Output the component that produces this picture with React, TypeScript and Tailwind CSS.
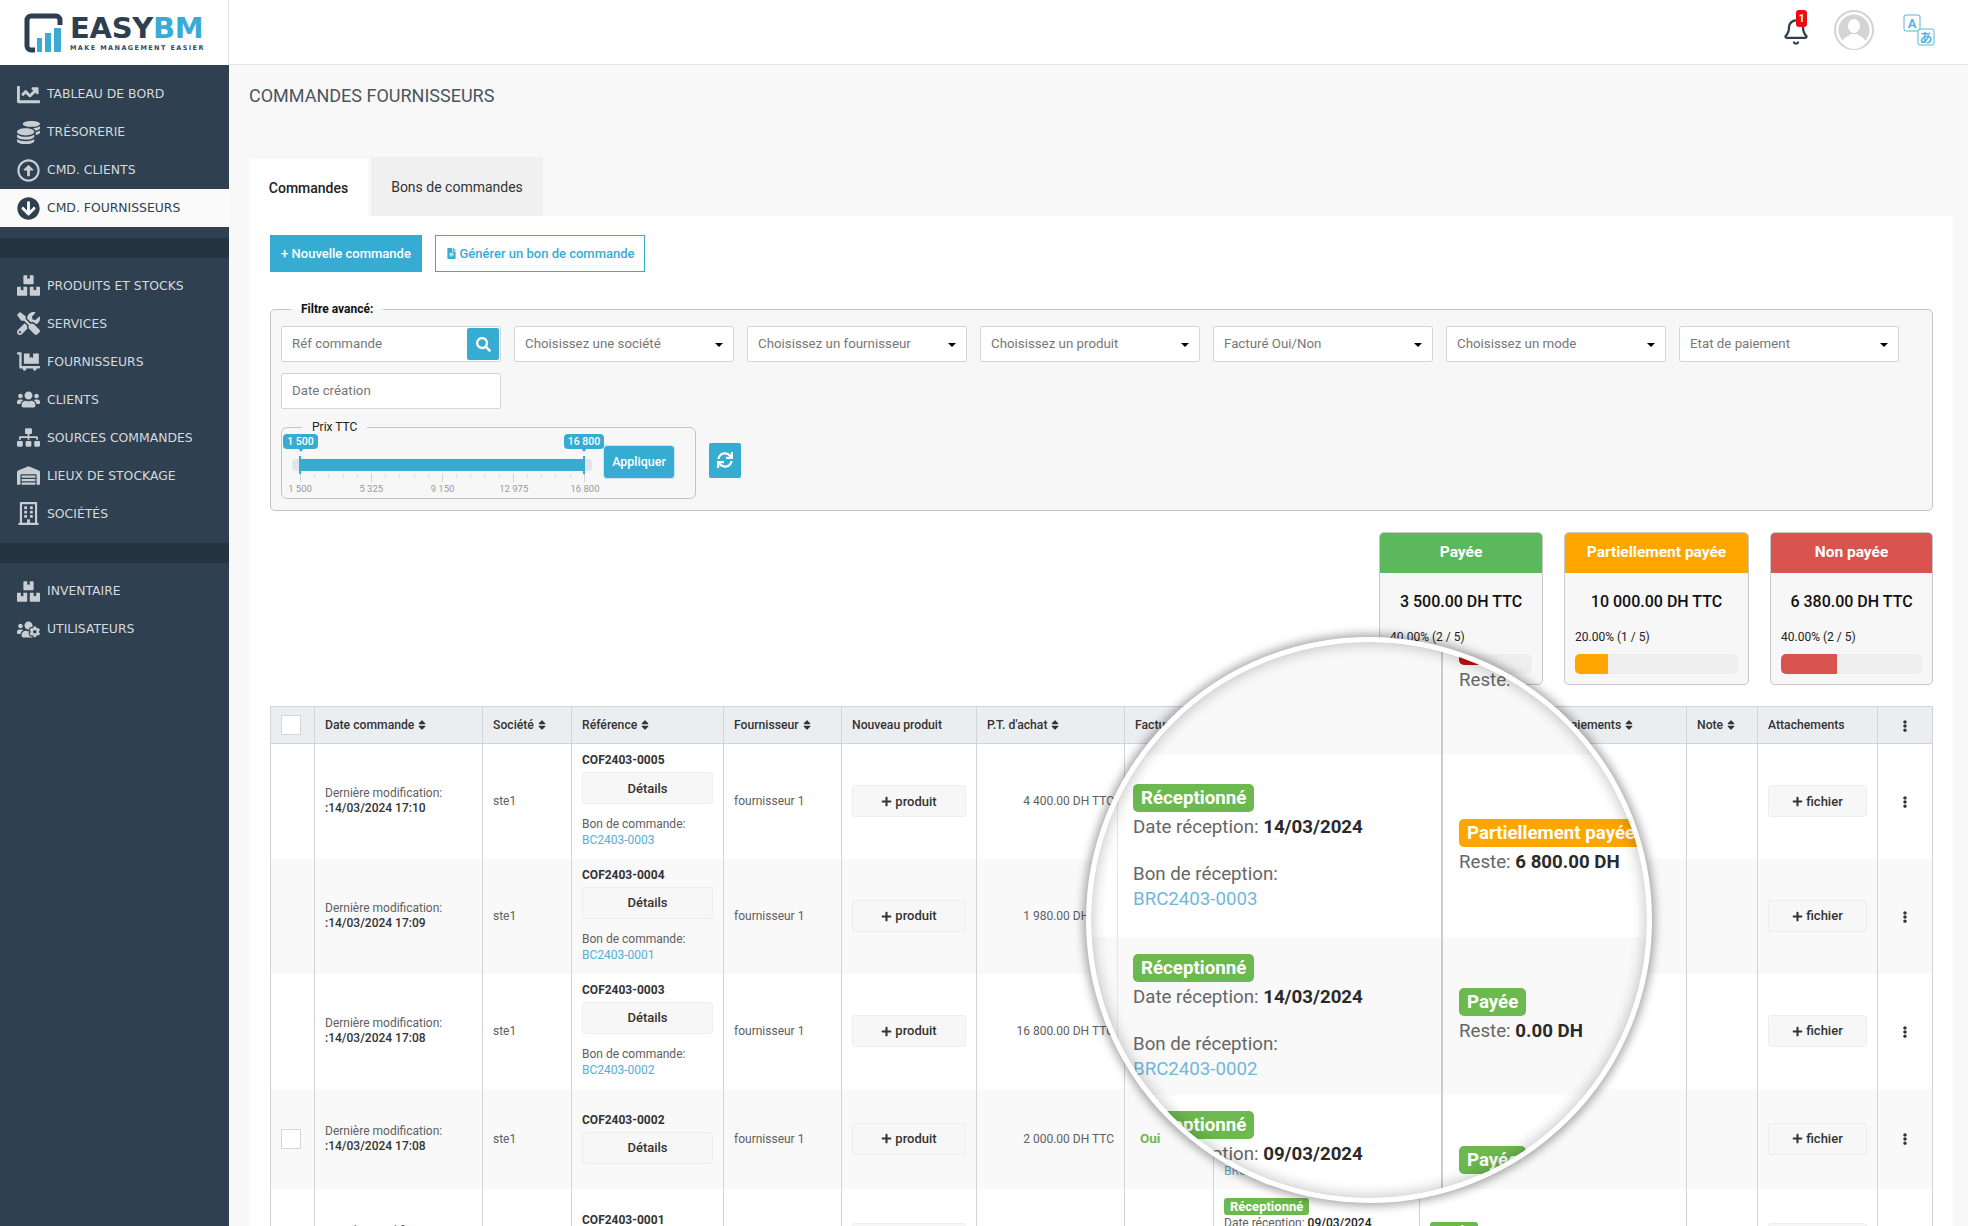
import { Bell } from 'lucide-react'
import {
  FaArrowCircleDown,
  FaBoxes,
  FaChartLine,
  FaCoins,
  FaDollyFlatbed,
  FaEllipsisV,
  FaFileAlt,
  FaPlus,
  FaRegArrowAltCircleUp,
  FaRegBuilding,
  FaSearch,
  FaSitemap,
  FaSort,
  FaSync,
  FaTools,
  FaUsers,
  FaUsersCog,
  FaWarehouse,
} from 'react-icons/fa'

const menuGroups = [
  [
    { label: 'Tableau de bord', icon: FaChartLine },
    { label: 'Trésorerie', icon: FaCoins },
    { label: 'Cmd. clients', icon: FaRegArrowAltCircleUp },
    { label: 'Cmd. fournisseurs', icon: FaArrowCircleDown, active: true },
  ],
  [
    { label: 'Produits et stocks', icon: FaBoxes },
    { label: 'Services', icon: FaTools },
    { label: 'Fournisseurs', icon: FaDollyFlatbed },
    { label: 'Clients', icon: FaUsers },
    { label: 'Sources commandes', icon: FaSitemap },
    { label: 'Lieux de stockage', icon: FaWarehouse },
    { label: 'Sociétés', icon: FaRegBuilding },
  ],
  [
    { label: 'Inventaire', icon: FaBoxes },
    { label: 'Utilisateurs', icon: FaUsersCog },
  ],
]

const selects = [
  'Choisissez une société',
  'Choisissez un fournisseur',
  'Choisissez un produit',
  'Facturé Oui/Non',
  'Choisissez un mode',
  'Etat de paiement',
]

const orders = [
  { date: '14/03/2024 17:10', ref: 'COF2403-0005', bc: 'BC2403-0003', amount: '4 400.00 DH TTC', h: 'h-[115px]', recep: '14/03/2024', brc: 'BRC2403-0003', pay: 'Partiellement payée', payBg: 'bg-[#ffa500]', rest: '6 800.00 DH' },
  { date: '14/03/2024 17:09', ref: 'COF2403-0004', bc: 'BC2403-0001', amount: '1 980.00 DH TTC', h: 'h-[115px]', recep: '14/03/2024', brc: 'BRC2403-0003', pay: 'Partiellement payée', payBg: 'bg-[#ffa500]', rest: '6 800.00 DH' },
  { date: '14/03/2024 17:08', ref: 'COF2403-0003', bc: 'BC2403-0002', amount: '16 800.00 DH TTC', h: 'h-[115px]', recep: '14/03/2024', brc: 'BRC2403-0002', pay: 'Payée', payBg: 'bg-[#6cb94f]', rest: '0.00 DH' },
  { date: '14/03/2024 17:08', ref: 'COF2403-0002', amount: '2 000.00 DH TTC', h: 'h-[100px]', check: true, oui: true, recep: '09/03/2024', brc: 'BRC2403-0001', pay: 'Payée', payBg: 'bg-[#6cb94f]', rest: '0.00 DH' },
  { date: '14/03/2024 17:07', ref: 'COF2403-0001', amount: '1 200.00 DH TTC', h: 'h-[100px]', check: true, oui: true, recep: '09/03/2024', brc: 'BRC2403-0000', pay: 'Payée', payBg: 'bg-[#6cb94f]', rest: '0.00 DH' },
]

const Logo = () => (
  <div className="flex h-[65px] w-[229px] shrink-0 items-center border-r border-[#e6e6e6] bg-white pl-[24px]">
    <svg width="40" height="40" viewBox="0 0 40 40" className="mr-[6px] shrink-0">
      <path
        d="M11 37H7a4 4 0 0 1-4-4V7a4 4 0 0 1 4-4h25a4 4 0 0 1 4 4v5"
        fill="none"
        stroke="#2c3e50"
        strokeWidth="5"
      />
      <rect x="13" y="25" width="5" height="14" fill="#39acd6" />
      <rect x="21" y="20" width="6" height="19" fill="#39acd6" />
      <rect x="30" y="15" width="7" height="24" rx="1" fill="#39acd6" />
    </svg>
    <div className="flex flex-col font-['DejaVu_Sans',sans-serif]">
      <div className="-mt-[2px] h-[30px] text-[29px] leading-[32px] font-bold tracking-[-0.3px] text-[#2c3e50]">
        EASY<span className="text-[#39acd6]">BM</span>
      </div>
      <div className="mt-[2px] text-[6.5px] leading-[8px] font-bold tracking-[1.4px] whitespace-nowrap text-[#3c4c5c]">
        MAKE MANAGEMENT EASIER
      </div>
    </div>
  </div>
)

const Sidebar = () => (
  <aside className="flex w-[229px] shrink-0 flex-col">
    <Logo />
    <nav className="flex flex-1 flex-col bg-[#2f4050] pt-[10px] font-['DejaVu_Sans',sans-serif]">
      {menuGroups.map((group, i) => (
        <div key={i}>
          {i > 0 && <div className="mt-[10.5px] mb-[9px] h-[20px] bg-[#263340]" />}
          {group.map((item) => {
            const Icon = item.icon
            return (
              <div
                key={item.label}
                className={
                  item.active
                    ? 'flex h-[38px] items-center bg-[#fafafa] text-[#2f4050]'
                    : 'flex h-[38px] items-center text-[#d5dade]'
                }
              >
                <div className={item.active ? 'flex w-[47px] justify-center pl-[9px] text-[#2f4050]' : 'flex w-[47px] justify-center pl-[9px] text-[#c8ced4]'}>
                  <Icon size={23} />
                </div>
                <span className="mt-[1px] text-[12.4px] uppercase">{item.label}</span>
              </div>
            )
          })}
        </div>
      ))}
    </nav>
  </aside>
)

const Topbar = () => (
  <header className="flex h-[65px] shrink-0 items-center justify-end border-b border-[#e4e4e4] bg-white pr-[33px]">
    <div className="relative mr-[24px] text-[#2f4050]">
      <Bell size={28} strokeWidth={2} />
      <span className="absolute -top-[8px] left-[14px] flex h-[17px] w-[11px] items-center justify-center rounded-[3px] bg-[#ee0a14] text-[10px] font-bold text-white">
        1
      </span>
    </div>
    <svg width="40" height="40" viewBox="0 0 40 40" className="mr-[29px] -mt-[4px]">
      <circle cx="20" cy="20" r="19" fill="#fff" stroke="#d4d4d4" strokeWidth="2" />
      <circle cx="20" cy="20" r="15.5" fill="#d4d4d4" />
      <ellipse cx="20" cy="16" rx="6" ry="7" fill="#fff" />
      <path d="M8 33c1-6 7-7 9-9h6c2 2 8 3 9 9a15 15 0 0 1-24 0z" fill="#fff" />
    </svg>
    <svg width="32" height="32" viewBox="0 0 32 32" className="-mt-[4px]">
      <rect x="1" y="1" width="16" height="16" rx="2" fill="#fff" stroke="#55b5dc" />
      <rect x="15" y="15" width="16" height="16" rx="2" fill="#fff" stroke="#55b5dc" />
      <text x="9" y="14" textAnchor="middle" fontSize="13" fontWeight="700" fill="#55b5dc" fontFamily="Roboto">A</text>
      <text x="23" y="28" textAnchor="middle" fontSize="13" fontWeight="700" fill="#55b5dc" fontFamily="Noto Sans CJK JP">&#12354;</text>
    </svg>
  </header>
)

const SelectBox = ({ label }: { label: string }) => (
  <div className="flex h-[36px] w-[220px] items-center justify-between rounded-[2px] border border-[#d6d6d6] bg-white pr-[10px] pl-[10px] text-[13.3px] text-[#777]">
    <span>{label}</span>
    <span className="mt-[2px] h-0 w-0 border-x-[4px] border-t-[4px] border-x-transparent border-t-black" />
  </div>
)

const SliderBadge = ({ label, className }: { label: string; className: string }) => (
  <div className={`absolute -top-px flex h-[15px] items-center justify-center rounded-[4px] bg-[#37acd3] text-[10.5px] font-medium text-white ${className}`}>
    {label}
    <span className="absolute top-[14px] left-1/2 -ml-[3px] h-0 w-0 border-x-[3px] border-t-[4px] border-x-transparent border-t-[#37acd3]" />
  </div>
)

const Slider = () => (
  <fieldset className="w-[415px] rounded-[6px] border border-[#c4c4c4]">
    <legend className="ml-[20px] px-[10px] text-[12px] leading-[16px] text-[#222]">Prix TTC</legend>
    <div className="flex">
      <div className="relative h-[63px] w-[321px] shrink-0">
        <div className="absolute top-[24px] left-[10px] h-[12px] w-[300px] rounded-[4px] bg-[#e1e4e9]" />
        <div className="absolute top-[24px] left-[18px] h-[12px] w-[284px] bg-[#37acd3]" />
        <div className="absolute top-[21px] left-[17px] h-[18px] w-[2px] bg-[#37acd3]" />
        <div className="absolute top-[21px] left-[301px] h-[18px] w-[2px] bg-[#37acd3]" />
        <SliderBadge label="1 500" className="left-px w-[35px]" />
        <SliderBadge label="16 800" className="left-[282px] w-[40px]" />
        <div className="absolute top-[39px] left-[18px] flex w-[285px] justify-between">
          {Array.from({ length: 21 }).map((_, i) => (
            <div key={i} className={i % 5 === 0 ? 'h-[8px] w-px bg-[#cfd2d6]' : 'h-[4px] w-px bg-[#dcdfe3]'} />
          ))}
        </div>
        <div className="absolute top-[47px] left-[-12px] flex w-[345px] justify-between text-[9.5px] leading-[14px] text-[#999]">
          {['1 500', '5 325', '9 150', '12 975', '16 800'].map((t) => (
            <span key={t} className="w-[60px] text-center">{t}</span>
          ))}
        </div>
      </div>
      <button className="mt-[10px] h-[34px] w-[72px] rounded-[4px] border border-[#cfe6ef] bg-[#37acd3] text-[12.5px] font-medium text-white">
        Appliquer
      </button>
    </div>
  </fieldset>
)

const Filters = () => (
  <fieldset className="-mr-px rounded-[5px] border border-[#c4c4c4] bg-[#f7f7f7] px-[10px] pb-[11px]">
    <legend className="ml-[10px] px-[10px] text-[12px] leading-[16px] font-bold text-[#111]">Filtre avancé:</legend>
    <div className="mt-[9px] flex flex-wrap gap-x-[13px] gap-y-[11px]">
      <div className="flex h-[36px] w-[220px] items-center justify-between rounded-[2px] border border-[#d6d6d6] bg-white pr-[1px] pl-[10px] text-[13.3px] text-[#777]">
        <span>Réf commande</span>
        <div className="flex h-[32px] w-[32px] items-center justify-center rounded-[2px] bg-[#37acd3] text-white">
          <FaSearch size={15} />
        </div>
      </div>
      {selects.map((s) => (
        <SelectBox key={s} label={s} />
      ))}
      <div className="flex h-[36px] w-[220px] items-center rounded-[2px] border border-[#d6d6d6] bg-white pl-[10px] text-[13.3px] text-[#777]">
        Date création
      </div>
    </div>
    <div className="mt-[10px] flex items-center gap-[13px]">
      <Slider />
      <button className="mt-[2px] flex h-[35px] w-[32px] items-center justify-center rounded-[2px] bg-[#37acd3] text-white">
        <FaSync size={16} />
      </button>
    </div>
  </fieldset>
)

const StatusCard = ({ title, amount, pct, header, fill, bar, width }: { title: string; amount: string; pct: string; header: string; fill: string; bar: string; width: string }) => (
  <div className={`${width} h-[153px] overflow-hidden rounded-[5px] border border-[#c9c9c9] bg-[#f7f7f7]`}>
    <div className={`${header} flex h-[40px] items-center justify-center text-[15.5px] font-bold text-white`}>{title}</div>
    <div className="mt-[17px] text-center text-[16px] leading-[24px] font-medium text-[#111]">{amount}</div>
    <div className="mt-[15px] px-[10px] text-[12px] leading-[16px] text-[#222]">{pct}</div>
    <div className="mx-[10px] mt-[9px] h-[20px] overflow-hidden rounded-[5px] bg-[#eeeeee]">
      <div className={`${fill} ${bar} h-full`} />
    </div>
  </div>
)

const Th = ({ label, sort, className }: { label: string; sort?: boolean; className?: string }) => (
  <th className={`border border-[#d2d5d8] px-[10px] text-left text-[12.2px] font-medium text-[#333] ${className ?? ''}`}>
    {label}
    {sort && <FaSort size={12} className="ml-[2px] inline align-[-2px] text-[#333]" />}
  </th>
)

const LightButton = ({ children, className }: { children: React.ReactNode; className?: string }) => (
  <div className={`flex h-[32px] items-center justify-center gap-[3px] rounded-[3px] border border-[#eeeeee] bg-[#f7f7f7] text-[13px] font-medium text-[#333] ${className ?? ''}`}>
    {children}
  </div>
)

const OrdersTable = () => (
  <table className="w-[1662px] table-fixed text-[12px] text-[#606060]">
    <colgroup>
      <col className="w-[44px]" />
      <col className="w-[168px]" />
      <col className="w-[89px]" />
      <col className="w-[152px]" />
      <col className="w-[118px]" />
      <col className="w-[135px]" />
      <col className="w-[148px]" />
      <col className="w-[89px]" />
      <col className="w-[206px]" />
      <col className="w-[267px]" />
      <col className="w-[71px]" />
      <col className="w-[120px]" />
      <col className="w-[55px]" />
    </colgroup>
    <thead>
      <tr className="h-[37px] bg-[#ebeef1]">
        <th className="border border-[#d2d5d8] px-[10px]">
          <div className="h-[20px] w-[20px] border border-[#d6d6d6] bg-white" />
        </th>
        <Th label="Date commande" sort />
        <Th label="Société" sort />
        <Th label="Référence" sort />
        <Th label="Fournisseur" sort />
        <Th label="Nouveau produit" />
        <Th label="P.T. d'achat" sort />
        <Th label="Facturé" sort />
        <Th label="Réception" sort />
        <Th label="Paiements" sort className="pl-[143px]" />
        <Th label="Note" sort />
        <Th label="Attachements" />
        <th className="border border-[#d2d5d8] text-center">
          <FaEllipsisV size={12} className="inline text-[#333]" />
        </th>
      </tr>
    </thead>
    <tbody>
      {orders.map((o, i) => (
        <tr key={o.ref} className={`${o.h} ${i % 2 === 1 ? 'bg-[#f9f9f9]' : 'bg-white'}`}>
          <td className="border-x border-[#d2d5d8] px-[10px]">
            {o.check && <div className="h-[20px] w-[20px] border border-[#d6d6d6] bg-white" />}
          </td>
          <td className="border-x border-[#d2d5d8] px-[10px] leading-[15px]">
            Dernière modification:
            <br />
            <span className="font-medium text-[#333]">:{o.date}</span>
          </td>
          <td className="border-x border-[#d2d5d8] px-[10px]">ste1</td>
          <td className="border-x border-[#d2d5d8] px-[10px] pb-[3px]">
            <div className="mb-[3px] font-bold text-[#333]">{o.ref}</div>
            <LightButton>Détails</LightButton>
            {o.bc && (
              <div className="mt-[12px] leading-[16px]">
                Bon de commande:
                <br />
                <span className="text-[#54afd6]">{o.bc}</span>
              </div>
            )}
          </td>
          <td className="border-x border-[#d2d5d8] px-[10px]">fournisseur 1</td>
          <td className="border-x border-[#d2d5d8] px-[10px]">
            <LightButton>
              <FaPlus size={11} />
              produit
            </LightButton>
          </td>
          <td className="border-x border-[#d2d5d8] px-[10px] text-right">{o.amount}</td>
          <td className="border-x border-[#d2d5d8] px-[15px]">
            {o.oui && <span className="text-[13.5px] font-bold text-[#6cb94f]">Oui</span>}
          </td>
          <td className="border-x border-[#d2d5d8] px-[10px] leading-[16px]">
            <div className="inline-block h-[17px] rounded-[3px] bg-[#6cb94f] px-[6px] align-top text-[13px] leading-[17px] font-bold text-white">Réceptionné</div>
            <div>
              Date réception: <b className="font-medium text-[#222]">{o.recep}</b>
            </div>
            <div className="mt-[16px]">Bon de réception:</div>
            <div className="text-[#54afd6]">{o.brc}</div>
          </td>
          <td className="border-x border-[#d2d5d8] px-[10px] leading-[16px]">
            <div className={`inline-block h-[17px] rounded-[3px] ${o.payBg} px-[6px] align-top text-[13px] leading-[17px] font-bold text-white`}>{o.pay}</div>
            <div>
              Reste: <b className="font-medium text-[#222]">{o.rest}</b>
            </div>
          </td>
          <td className="border-x border-[#d2d5d8]" />
          <td className="border-x border-[#d2d5d8] px-[10px]">
            <LightButton>
              <FaPlus size={11} />
              fichier
            </LightButton>
          </td>
          <td className="border-x border-[#d2d5d8] text-center">
            <FaEllipsisV size={12} className="inline text-[#333]" />
          </td>
        </tr>
      ))}
    </tbody>
  </table>
)

const LensBadge = ({ bg, children }: { bg: string; children: React.ReactNode }) => (
  <div className={`${bg} inline-block h-[28px] rounded-[5px] px-[8px] text-[18.7px] leading-[28px] font-bold whitespace-nowrap text-white`}>
    {children}
  </div>
)

const LensLine = ({ label, value }: { label: string; value: string }) => (
  <div className="h-[30px] text-[18.7px] leading-[30px] whitespace-nowrap text-[#666]">
    {label} <b className="font-bold text-[#2a2a2a]">{value}</b>
  </div>
)

const LensRow = ({ bg, h, top, gap, date, brc, payTop, pay, payBg, rest }: { bg: string; h: string; top: string; gap: string; date: string; brc?: string; payTop: string; pay: string; payBg: string; rest: string }) => (
  <div className={`${bg} ${h} flex`}>
    <div className={`ml-[26px] w-[324px] shrink-0 border-l border-[#e6e6e6] pl-[15px] ${top}`}>
      <LensBadge bg="bg-[#6cb94f]">Réceptionné</LensBadge>
      <LensLine label="Date réception:" value={date} />
      {brc && (
        <div className={gap}>
          <div className="h-[26px] text-[18.7px] leading-[26px] text-[#666]">Bon de réception:</div>
          <div className="h-[25px] text-[18.7px] leading-[25px] text-[#6fb8da]">{brc}</div>
        </div>
      )}
    </div>
    <div className={`flex-1 border-l-2 border-[#cccccc] pl-[16px] ${payTop}`}>
      <LensBadge bg={payBg}>{pay}</LensBadge>
      <LensLine label="Reste:" value={rest} />
    </div>
  </div>
)

// loupe posee sur le tableau, le texte y est grossi
const Lens = () => (
  <div className="absolute top-[637px] left-[1086px] h-[566px] w-[566px] overflow-hidden rounded-full border-[5px] border-white bg-white shadow-[0_0_10px_3px_rgba(0,0,0,0.35)]">
    <div className="flex h-[113px] bg-[#f9f9f9]">
      <div className="w-[350px] shrink-0" />
      <div className="-mt-[5px] flex-1 border-l-2 border-[#cccccc] pl-[16px]">
        <LensBadge bg="bg-[#c21010]">Non payée</LensBadge>
        <LensLine label="Reste:" value="6 380.00 DH" />
      </div>
    </div>
    <LensRow bg="bg-white" h="h-[182px]" top="pt-[29px]" gap="mt-[19px]" date="14/03/2024" brc="BRC2403-0003" payTop="pt-[64px]" pay="Partiellement payée" payBg="bg-[#ffa500]" rest="6 800.00 DH" />
    <LensRow bg="bg-[#f9f9f9]" h="h-[158px]" top="pt-[17px]" gap="mt-[19px]" date="14/03/2024" brc="BRC2403-0002" payTop="pt-[51px]" pay="Payée" payBg="bg-[#6cb94f]" rest="0.00 DH" />
    <LensRow bg="bg-white" h="h-[120px]" top="pt-[16px]" gap="mt-[19px]" date="09/03/2024" payTop="pt-[51px]" pay="Payée" payBg="bg-[#6cb94f]" rest="0.00 DH" />
    <div className="pointer-events-none absolute inset-0 rounded-full shadow-[inset_0_0_14px_2px_rgba(0,0,0,0.22)]" />
  </div>
)

export default function App() {
  return (
    <div className="relative flex h-[1226px] w-[1968px] overflow-hidden bg-[#f8f8f8] font-[Roboto,sans-serif]">
      <Sidebar />
      <div className="flex min-w-0 flex-1 flex-col">
        <Topbar />
        <main className="flex-1 pr-[15px] pl-[20px]">
          <h1 className="mt-[21px] text-[18px] leading-[20px] font-normal text-[#4a5560] uppercase">Commandes fournisseurs</h1>
          <div className="mt-[51px] flex items-end">
            <div className="flex h-[57px] w-[119px] items-center justify-center bg-white pt-[1px] text-[14px] font-medium text-[#222]">Commandes</div>
            <div className="ml-[3px] flex h-[59px] w-[172px] items-center justify-center bg-[#f0f0f0] pt-[1px] text-[14px] text-[#333]">Bons de commandes</div>
          </div>
          <section className="h-[1100px] bg-white px-[21px] pt-[19px]">
            <div className="flex gap-[13px] text-[13px] font-medium">
              <div className="flex h-[37px] w-[152px] items-center justify-center bg-[#37acd3] text-white">+ Nouvelle commande</div>
              <div className="flex h-[37px] w-[210px] items-center justify-center gap-[3px] border border-[#37acd3] bg-white text-[#37acd3]">
                <FaFileAlt size={11} />
                Générer un bon de commande
              </div>
            </div>
            <div className="mt-[29px]">
              <Filters />
            </div>
            <div className="-mr-px mt-[21px] mb-[21px] flex justify-end gap-[21px]">
              <StatusCard title="Payée" amount="3 500.00 DH TTC" pct="40.00% (2 / 5)" header="bg-[#5cb85c]" fill="bg-[#5cb85c]" bar="w-[40%]" width="w-[164px]" />
              <StatusCard title="Partiellement payée" amount="10 000.00 DH TTC" pct="20.00% (1 / 5)" header="bg-[#ffa500]" fill="bg-[#ffa500]" bar="w-[20%]" width="w-[185px]" />
              <StatusCard title="Non payée" amount="6 380.00 DH TTC" pct="40.00% (2 / 5)" header="bg-[#d9534f]" fill="bg-[#d9534f]" bar="w-[40%]" width="w-[163px]" />
            </div>
            <OrdersTable />
          </section>
        </main>
      </div>
      <Lens />
    </div>
  )
}
